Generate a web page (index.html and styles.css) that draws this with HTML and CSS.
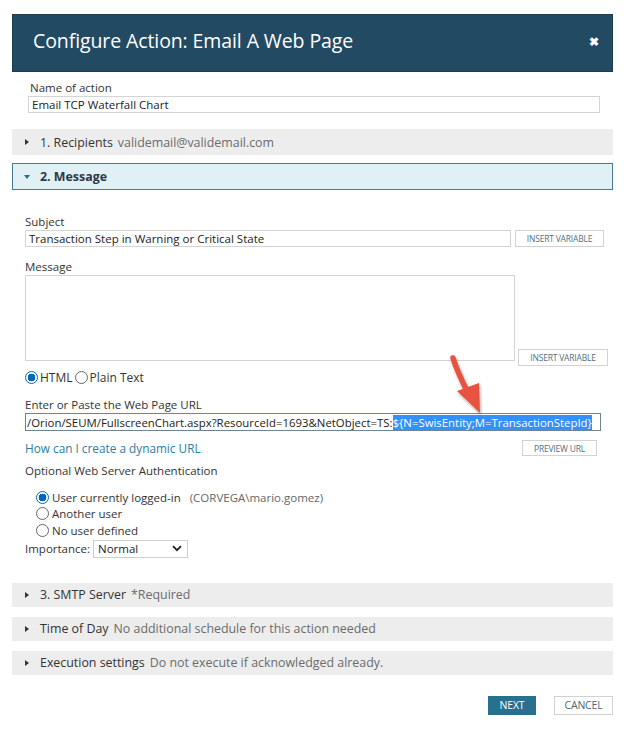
FILE: index.html
```html
<!DOCTYPE html>
<html>
<head>
<meta charset="utf-8">
<link rel="stylesheet" href="styles.css">
</head>
<body>
<div class="dialog">
  <div class="header">
    <span class="title">Configure Action: Email A Web Page</span>
    <span class="close">&#x2716;</span>
  </div>

  <div class="name-block">
    <div class="label">Name of action</div>
    <div class="input name-input">Email TCP Waterfall Chart</div>
  </div>

  <div class="bar bar-first"><span class="tri tri-right"></span><span class="bar-title">1. Recipients</span><span class="bar-sub">validemail@validemail.com</span></div>
  <div class="bar bar-open"><span class="tri tri-down"></span><span class="bar-title bold">2. Message</span></div>

  <div class="message-body">
    <div class="label subject-label">Subject</div>
    <div class="row">
      <div class="input subject-input">Transaction Step in Warning or Critical State</div>
      <div class="btn small-btn">INSERT VARIABLE</div>
    </div>

    <div class="label msg-label">Message</div>
    <div class="row row-end">
      <div class="textarea"></div>
      <div class="btn small-btn btn-low">INSERT VARIABLE</div>
    </div>

    <div class="radio-line">
      <span class="radio checked"></span><span class="rtext">HTML</span>
      <span class="radio"></span><span class="rtext">Plain Text</span>
    </div>

    <div class="label url-label">Enter or Paste the Web Page URL</div>
    <div class="url-input"><span class="cut">/Orion/SEUM/FullscreenChart.aspx?ResourceId=1693&amp;NetObject=TS:</span><span class="sel">${N=SwisEntity;M=TransactionStepId}</span></div>

    <div class="row link-row">
      <span class="link">How can I create a dynamic URL</span>
      <div class="btn preview-btn">PREVIEW URL</div>
    </div>

    <div class="label auth-label">Optional Web Server Authentication</div>
    <div class="auth-options">
      <div class="opt"><span class="radio checked"></span><span class="rtext">User currently logged-in</span><span class="muted">(CORVEGA\mario.gomez)</span></div>
      <div class="opt"><span class="radio"></span><span class="rtext">Another user</span></div>
      <div class="opt"><span class="radio"></span><span class="rtext">No user defined</span></div>
    </div>

    <div class="importance">
      <span class="label-inline">Importance:</span>
      <div class="select"><span>Normal</span>
        <svg width="10" height="7" viewBox="0 0 10 7"><path d="M1 1.2 L5 5.2 L9 1.2" fill="none" stroke="#222" stroke-width="1.8"/></svg>
      </div>
    </div>
  </div>

  <div class="bar bar-smtp"><span class="tri tri-right"></span><span class="bar-title">3. SMTP Server</span><span class="bar-sub">*Required</span></div>
  <div class="bar"><span class="tri tri-right"></span><span class="bar-title">Time of Day</span><span class="bar-sub">No additional schedule for this action needed</span></div>
  <div class="bar"><span class="tri tri-right"></span><span class="bar-title">Execution settings</span><span class="bar-sub">Do not execute if acknowledged already.</span></div>

  <div class="footer">
    <div class="btn next">NEXT</div>
    <div class="btn cancel">CANCEL</div>
  </div>

  <svg class="arrow" width="60" height="70" viewBox="0 0 60 70">
    <defs>
      <filter id="sh" x="-30%" y="-30%" width="160%" height="160%">
        <feDropShadow dx="1" dy="2" stdDeviation="1.5" flood-color="#000" flood-opacity="0.35"/>
      </filter>
    </defs>
    <g filter="url(#sh)">
      <path d="M6 5 C 10 18, 16 30, 21 40" fill="none" stroke="#e8533f" stroke-width="5.5" stroke-linecap="round"/>
      <path d="M10 38 L33 60 L32 30 Z" fill="#e8533f"/>
    </g>
  </svg>
</div>
</body>
</html>
```

FILE: styles.css
```css
* { box-sizing: border-box; }
html, body { margin: 0; padding: 0; background: #fff; }
body {
  font-family: "Open Sans", "Noto Sans", sans-serif;
  font-size: 11.5px;
  color: #333;
}
.dialog {
  position: relative;
  width: 624px;
  height: 729px;
  padding: 14px 11px 0 12px;
  display: flex;
  flex-direction: column;
}
.header {
  height: 58px;
  background: #234a63;
  display: flex;
  align-items: center;
  justify-content: space-between;
  padding: 0 13px 0 20px;
  border: 1px solid #1b3c51;
}
.title {
  color: #fff;
  font-size: 19.5px;
  margin-top: -6px;
  letter-spacing: -0.1px;
}
.close {
  color: #fff;
  font-size: 12px;
  font-weight: bold;
  margin-top: -4px;
}
.label { line-height: 16px; color: #333; }
.name-block { padding: 8px 13px 0 18px; }
.input {
  height: 17px;
  border: 1px solid #d4d4d4;
  line-height: 15px;
  padding: 0 3px;
  color: #222;
  white-space: nowrap;
  overflow: hidden;
}
.name-input { width: 572px; margin-left: -2px; }
.bar {
  height: 26px;
  background: #ededee;
  display: flex;
  align-items: center;
  padding-left: 12px;
  font-size: 12.4px;
  margin-top: 8px;
}
.bar-first { margin-top: 16px; }
.bar-open {
  height: 27px;
  background: #e1f0f5;
  border: 1px solid #4a7a8d;
  padding-left: 11px;
}
.bar-smtp { margin-top: 25px; height: 24px; }
.bar-smtp ~ .bar { height: 24px; margin-top: 10px; }
.bar-title { color: #333; margin-right: 5px; }
.bold { font-weight: bold; color: #2a3a44; }
.bar-sub { color: #6b6b6b; }
.tri { display: inline-block; width: 0; height: 0; margin-right: 10px; }
.tri-right {
  border-top: 3.5px solid transparent;
  border-bottom: 3.5px solid transparent;
  border-left: 4px solid #333;
  margin-left: 1px;
  margin-right: 11px;
}
.tri-down {
  border-left: 3.5px solid transparent;
  border-right: 3.5px solid transparent;
  border-top: 4px solid #2b6d87;
  margin-right: 10px;
}
.message-body { padding: 0 0 0 13px; display: flex; flex-direction: column; }
.subject-label { margin-top: 24px; }
.row { display: flex; align-items: center; }
.row-end { align-items: flex-end; }
.subject-input { width: 486px; }
.btn {
  border: 1px solid #d2d2d2;
  background: #fff;
  color: #51707f;
  font-size: 8.5px;
  display: flex;
  align-items: center;
  justify-content: center;
  letter-spacing: -0.2px;
}
.small-btn { width: 89px; height: 17px; margin-left: 4px; }
.msg-label { margin-top: 12px; }
.textarea { width: 490px; height: 86px; border: 1px solid #d4d4d4; }
.btn-low { margin-left: 3px; margin-bottom: -5px; width: 90px; }
.radio-line { display: flex; align-items: center; margin-top: 8px; height: 16px; font-size: 12px; }
.radio {
  display: inline-block;
  width: 13px;
  height: 13px;
  border-radius: 50%;
  border: 1px solid #666;
  background: #fff;
  flex: none;
}
.radio.checked {
  border: 1px solid #0067c0;
  background: radial-gradient(circle, #0067c0 0 3.6px, #fff 4.1px);
}
.rtext { margin-left: 2px; margin-right: 2px; color: #333; }
.url-label { margin-top: 12px; }
.url-input {
  width: 576px;
  height: 18px;
  border: 1px solid #6f8594;
  display: flex;
  justify-content: flex-start;
  align-items: center;
  overflow: hidden;
  white-space: nowrap;
  color: #222;
  padding-left: 1px;
  font-size: 11.4px;
}
.cut { flex: none; }
.sel { background: #3390ff; color: #fff; flex: none; }
.link-row { margin-top: 9px; justify-content: space-between; width: 572px; }
.link { color: #2d7ea3; font-size: 11.8px; }
.preview-btn { width: 75px; height: 16px; }
.auth-label { margin-top: 7px; }
.auth-options { margin-top: 10px; padding-left: 11px; display: flex; flex-direction: column; }
.opt { display: flex; align-items: center; height: 16.5px; }
.opt .radio { margin-right: 1px; }
.muted { color: #666; margin-left: 7px; }
.importance { display: flex; align-items: center; margin-top: 1px; }
.label-inline { margin-right: 3px; }
.select {
  width: 95px;
  height: 18px;
  border: 1px solid #cfcfcf;
  display: flex;
  align-items: center;
  justify-content: space-between;
  padding: 0 5px 0 4px;
  color: #222;
}
.footer { display: flex; justify-content: flex-end; margin-top: 21px; gap: 18px; }
.next {
  width: 48px;
  height: 19px;
  background: #27718e;
  border-color: #27718e;
  color: #fff;
  font-size: 10.5px;
}
.cancel { width: 59px; height: 19px; font-size: 10.5px; color: #4d6573; }
.arrow { position: absolute; left: 447px; top: 353px; }
```
